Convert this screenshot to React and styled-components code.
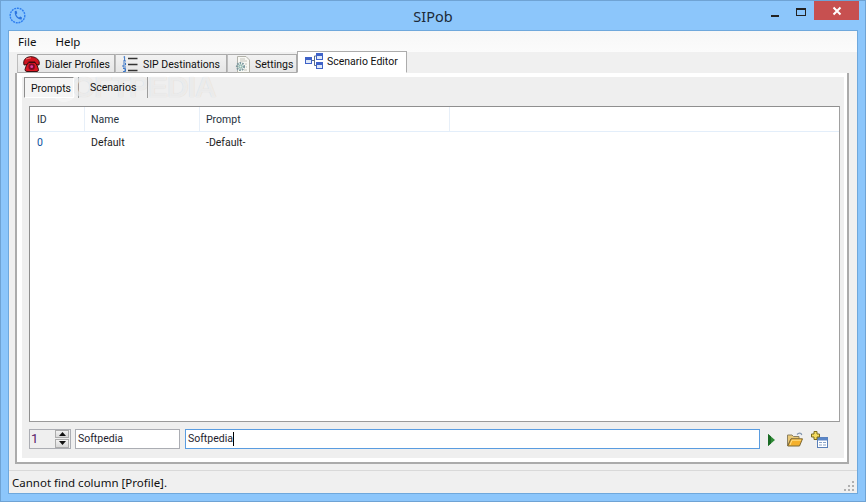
import React from "react";
import styled, { createGlobalStyle } from "styled-components";

const Global = createGlobalStyle`
  html, body { margin: 0; padding: 0; background: #8cc6fb; }
  * { box-sizing: border-box; }
`;

const Window = styled.div`
  position: relative;
  width: 866px;
  height: 502px;
  display: flex;
  flex-direction: column;
  background: #8cc6fb;
  border: 1px solid #6fa3d4;
  padding: 0 7px 7px;
  font-family: "Roboto", "Liberation Sans", sans-serif;
  font-size: 10.5px;
  color: #111;
  overflow: hidden;
`;
const TitleBar = styled.div`
  height: 29px;
  flex: none;
  display: grid;
  grid-template-columns: 1fr auto 1fr;
  align-items: center;
`;
const AppIcon = styled.svg`
  width: 17px;
  height: 17px;
  margin-left: 1px;
`;
const Title = styled.div`
  font-family: "Noto Sans", sans-serif;
  font-size: 14.5px;
  color: #1c2a38;
  margin-top: 1px;
`;
const Caption = styled.div`
  display: flex;
  justify-self: end;
  align-self: start;
  height: 20px;
  margin-right: -1px;
`;
const CaptionBtn = styled.div`
  width: ${p => p.$w}px;
  height: 19px;
  display: flex;
  align-items: center;
  justify-content: center;
  background: ${p => p.$bg || "transparent"};
`;
const Client = styled.div`
  flex: 1;
  display: flex;
  flex-direction: column;
  background: #f0f0f0;
  border: 1px solid #6fa8dc;
  min-height: 0;
`;
const MenuBar = styled.div`
  height: 21px;
  flex: none;
  display: flex;
  align-items: center;
  gap: 19px;
  padding: 0 0 0 9px;
  font-family: "Noto Sans", sans-serif;
  font-size: 11.5px;
  background: linear-gradient(#f7f7f7, #fbfbfb);
`;
const MenuItem = styled.span`
  line-height: 20px;
`;
const TabStrip = styled.div`
  height: 21px;
  flex: none;
  display: flex;
  align-items: flex-end;
  padding-left: 8px;
  margin-bottom: -1px;
  position: relative;
  z-index: 1;
  background: #f0f0f0;
`;
const Tab = styled.div`
  width: ${p => p.$w}px;
  height: ${p => (p.$active ? 22 : 19)}px;
  flex: none;
  display: flex;
  align-items: center;
  gap: ${p => p.$gap}px;
  padding: ${p => (p.$active ? `0 0 2px ${p.$pl}px` : `2px 0 0 ${p.$pl}px`)};
  background: ${p => (p.$active ? "#fff" : "linear-gradient(#f2f2f2, #e6e6e6)")};
  border: 1px solid #acacac;
  border-left-color: ${p => (p.$active ? "#acacac" : "#bdbdbd")};
  border-bottom: ${p => (p.$active ? "1px solid #fff" : "1px solid #acacac")};
  white-space: nowrap;
  position: relative;
  z-index: ${p => (p.$active ? 2 : 0)};
  svg { flex: none; margin-top: -1px; }
`;
const TabPanel = styled.div`
  flex: 1;
  min-height: 0;
  margin: 0 8px 6px 6px;
  border: 2px solid #ababab;
  border-top: 1px solid #acacac;
  background: #fff;
  padding: 4px 3px 4px 5px;
  display: flex;
`;
const Inner = styled.div`
  flex: 1;
  min-width: 0;
  background: #efefef;
  display: flex;
  flex-direction: column;
  padding: 0 4px 0 7px;
`;
const SubTabs = styled.div`
  height: 21px;
  margin-left: -5px;
  flex: none;
  display: flex;
  align-items: stretch;
`;
const SubTabActive = styled.div`
  position: relative;
  z-index: 6;
  width: 50px;
  height: 21px;
  display: flex;
  align-items: center;
  padding: 2px 0 0 6px;
  border: 1px solid;
  border-color: #8d8d8d #fff #fff #8d8d8d;
  background-color: #f5f5f5;
  background-image: radial-gradient(#d2d2d2 0.6px, transparent 0.7px);
  background-size: 2px 2px;
  margin-right: 4px;
`;
const SubTab = styled.div`
  position: relative;
  z-index: 6;
  width: 69px;
  display: flex;
  align-items: center;
  padding: 0 0 1px 11px;
  border-right: 1px solid #9c9c9c;
`;
const SubDivider = styled.div`
  width: 1px;
  background: #9c9c9c;
`;
const ListView = styled.div`
  flex: 1;
  min-height: 0;
  margin-top: 8px;
  background: #fff;
  border: 1px solid #8f8f8f;
  border-right-color: #a0a0a0;
  border-bottom-color: #9a9a9a;
  display: flex;
  flex-direction: column;
`;
const HeaderRow = styled.div`
  height: 25px;
  flex: none;
  display: flex;
  border-bottom: 1px solid #e3eefa;
`;
const HeaderCell = styled.div`
  width: ${p => (p.$w ? `${p.$w}px` : "auto")};
  flex: ${p => (p.$w ? "none" : 1)};
  display: flex;
  align-items: center;
  padding: 1px 0 0 ${p => p.$pl}px;
  border-right: ${p => (p.$w ? "1px solid #e7eff8" : "none")};
  color: #26323e;
`;
const Row = styled.div`
  height: 19px;
  display: flex;
  align-items: center;
  padding-top: 1px;
`;
const Cell = styled.div`
  width: ${p => p.$w}px;
  padding-left: ${p => p.$pl}px;
  color: ${p => p.$c || "#1d1d1d"};
`;
const Footer = styled.div`
  height: 36px;
  flex: none;
  display: flex;
  align-items: center;
  padding-bottom: 3px;
`;
const Spinner = styled.div`
  width: 42px;
  height: 20px;
  flex: none;
  border: 1px solid #abadb3;
  display: flex;
  color: #5a1a6a;
  align-items: center;
  padding-left: 1px;
  margin-right: 4px;
  background: #efefef;
  font-size: 13px;
`;
const SpinValue = styled.span`
  flex: 1;
`;
const SpinButtons = styled.div`
  width: 14px;
  height: 18px;
  display: flex;
  flex-direction: column;
  gap: 1px;
  margin-right: 1px;
`;
const SpinButton = styled.div`
  flex: 1;
  background: linear-gradient(#f2f2f2, #d8d8d8);
  border: 1px solid #acacac;
  display: flex;
  align-items: center;
  justify-content: center;
`;
const Input = styled.div`
  width: ${p => (p.$grow ? "auto" : `${p.$w}px`)};
  flex: ${p => (p.$grow ? 1 : "none")};
  height: 20px;
  margin-right: ${p => p.$mr}px;
  background: #fff;
  border: 1px solid ${p => (p.$focus ? "#5a9ce0" : "#abadb3")};
  padding: 0 2px;
  display: flex;
  align-items: center;
  color: #1d1d2d;
`;
const Caret = styled.span`
  width: 1px;
  height: 14px;
  background: #000;
`;
const Tools = styled.div`
  width: 80px;
  flex: none;
  display: flex;
  align-items: center;
  padding-left: 8px;
`;
const ToolIcon = styled.svg`
  flex: none;
  margin-right: ${p => p.$mr}px;
  margin-top: ${p => p.$mt || 0}px;
`;
const StatusBar = styled.div`
  height: 23px;
  flex: none;
  border-top: 1px solid #d9d9d9;
  display: flex;
  align-items: center;
  padding-left: 3px;
  position: relative;
  font-family: "Noto Sans", sans-serif;
  font-size: 11.5px;
`;
const Grip = styled.svg`
  position: absolute;
  right: 2px;
  bottom: 1px;
`;
const Watermark = styled.div`
  position: absolute;
  left: 52px;
  top: 69px;
  font-family: "Liberation Sans", sans-serif;
  font-weight: 700;
  font-size: 30px;
  letter-spacing: -1px;
  color: rgba(255, 255, 255, 0.6);
  text-shadow: 0 0 1px rgba(0, 0, 0, 0.14);
  pointer-events: none;
  z-index: 5;
`;
const WatermarkRing = styled.div`
  position: absolute;
  left: 50px;
  top: 75px;
  width: 26px;
  height: 26px;
  border-radius: 50%;
  border: 3px solid rgba(255, 255, 255, 0.35);
  pointer-events: none;
  z-index: 5;
`;

const PhoneRed = () => (
  <svg width="17" height="16" viewBox="0 0 17 16">
    <path d="M.7 7 C.5 3 4 .7 8 .7 C12 .7 16.3 3 16.3 7 L16 9 L12.5 8.5 L12 6 L5.5 6 L4.5 8.5 L1 9 Z" fill="#d0141f" stroke="#2c0406" strokeWidth=".9" />
    <path d="M3.5 9 L6 6.5 H12 L14 9 L15.5 13.5 Q15.5 15.5 14 15.5 H4 Q2 15.5 2 13.5 Z" fill="#dc1622" stroke="#2c0406" strokeWidth=".9" />
    <circle cx="8.7" cy="10.7" r="3.2" fill="#7d0a24" />
    <circle cx="8.7" cy="10.7" r="1.4" fill="#e23fa8" />
    <path d="M3 3 L8 1.8" stroke="#f77272" strokeWidth="1" />
  </svg>
);
const NumberedList = () => (
  <svg width="16" height="16" viewBox="0 0 16 16">
    <path d="M1.5 1 L2.6 0.5 V5 M1 5 H4" stroke="#2b6cc4" strokeWidth=".9" fill="none" />
    <path d="M1 7 H3.5 V9 H1 V11 H4" stroke="#2b6cc4" strokeWidth=".9" fill="none" />
    <path d="M1 12.5 H3.5 V15.5 H1 M2 14 H3.5" stroke="#2b6cc4" strokeWidth=".9" fill="none" />
    <path d="M6 2.5 H15.5 M6 8.5 H15.5 M6 14.5 H15.5" stroke="#333" strokeWidth="1.3" />
  </svg>
);
const SettingsDoc = () => (
  <svg width="17" height="17" viewBox="0 0 17 17">
    <path d="M3.5 .5 H12 L15.5 4 V16.5 H3.5 Z" fill="#f8f8f4" stroke="#b2b2aa" />
    <path d="M6 3 H11 M6 5 H13 M11 8 H13 M12 11 H13 M10 14 H13" stroke="#c4c4bc" />
    <circle cx="6.5" cy="10.5" r="3.6" fill="none" stroke="#7c9aa0" strokeWidth="2" strokeDasharray="1.6 1" />
    <circle cx="6.5" cy="10.5" r="2.2" fill="#8fb6b0" />
    <circle cx="6.5" cy="10.5" r="1" fill="#e4efe8" />
  </svg>
);
const Diagram = () => (
  <svg width="18" height="16" viewBox="0 0 18 16">
    <path d="M7 7.5 H9.5 M9.5 3 V12.5 M9.5 3 H11 M9.5 12.5 H11" stroke="#5a6c8c" fill="none" />
    <rect x=".5" y="4.5" width="6" height="6" fill="#dfe9f8" stroke="#3f62c8" />
    <rect x="1" y="5" width="5" height="2" fill="#3f62c8" />
    <rect x="11.5" y=".5" width="6" height="6" fill="#dfe9f8" stroke="#3f62c8" />
    <rect x="12" y="1" width="5" height="2" fill="#3f62c8" />
    <rect x="11.5" y="9.5" width="6" height="6" fill="#dfe9f8" stroke="#3f62c8" />
    <rect x="12" y="10" width="5" height="2" fill="#3f62c8" />
  </svg>
);

export default function App() {
  return (
    <>
      <Global />
      <Window>
        <TitleBar>
          <AppIcon viewBox="0 0 17 17">
            <circle cx="8.5" cy="8.5" r="7.3" fill="none" stroke="#2f7fef" strokeWidth="1.4" strokeDasharray="2 .8" />
            <path d="M5.8 4 L7.5 3.8 L8.3 6.2 L7.2 7.2 C7.6 8.6 8.6 9.8 10 10.4 L11.2 9.4 L13 10.6 L12.6 12.4 C9 13 5 9 5.8 4 Z" fill="#2a74e0" />
          </AppIcon>
          <Title>SIPob</Title>
          <Caption>
            <CaptionBtn $w={27}>
              <svg width="10" height="16" viewBox="0 0 10 16"><rect x="1" y="12" width="8" height="2" fill="#222" /></svg>
            </CaptionBtn>
            <CaptionBtn $w={26}>
              <svg width="12" height="16" viewBox="0 0 12 16"><rect x="1.5" y="5.5" width="9" height="7" fill="none" stroke="#222" /><rect x="1" y="5" width="10" height="2" fill="#222" /></svg>
            </CaptionBtn>
            <CaptionBtn $w={45} $bg="#c75050">
              <svg width="10" height="10" viewBox="0 0 10 10"><path d="M1.5 1.5 L8.5 8.5 M8.5 1.5 L1.5 8.5" stroke="#fff" strokeWidth="2" /></svg>
            </CaptionBtn>
          </Caption>
        </TitleBar>
        <Client>
          <MenuBar>
            <MenuItem>File</MenuItem>
            <MenuItem>Help</MenuItem>
          </MenuBar>
          <TabStrip>
            <Tab $w={98} $pl={5} $gap={5}><PhoneRed />Dialer Profiles</Tab>
            <Tab $w={112} $pl={6} $gap={5}><NumberedList />SIP Destinations</Tab>
            <Tab $w={70} $pl={6} $gap={4}><SettingsDoc />Settings</Tab>
            <Tab $w={110} $pl={7} $gap={4} $active><Diagram />Scenario Editor</Tab>
          </TabStrip>
          <TabPanel>
            <Inner>
              <SubTabs>
                <SubTabActive>Prompts</SubTabActive>
                <SubDivider />
                <SubTab>Scenarios</SubTab>
              </SubTabs>
              <ListView>
                <HeaderRow>
                  <HeaderCell $w={55} $pl={7}>ID</HeaderCell>
                  <HeaderCell $w={115} $pl={6}>Name</HeaderCell>
                  <HeaderCell $w={250} $pl={6}>Prompt</HeaderCell>
                  <HeaderCell $pl={0} />
                </HeaderRow>
                <Row>
                  <Cell $w={55} $pl={7} $c="#0b4f9e">0</Cell>
                  <Cell $w={115} $pl={6}>Default</Cell>
                  <Cell $w={250} $pl={6}>-Default-</Cell>
                </Row>
              </ListView>
              <Footer>
                <Spinner>
                  <SpinValue>1</SpinValue>
                  <SpinButtons>
                    <SpinButton><svg width="7" height="4" viewBox="0 0 7 4"><path d="M3.5 0 L7 4 H0 Z" fill="#111" /></svg></SpinButton>
                    <SpinButton><svg width="7" height="4" viewBox="0 0 7 4"><path d="M0 0 H7 L3.5 4 Z" fill="#111" /></svg></SpinButton>
                  </SpinButtons>
                </Spinner>
                <Input $w={105} $mr={5}>Softpedia</Input>
                <Input $grow $focus $mr={0}>Softpedia<Caret /></Input>
                <Tools>
                  <ToolIcon $mr={12} width="7" height="12" viewBox="0 0 7 12" $mt={2}>
                    <path d="M0 0 L7 6 L0 12 Z" fill="#2d8a34" />
                    <path d="M0 0 L3 2.6 V9.4 L0 12 Z" fill="#1a6a24" />
                  </ToolIcon>
                  <ToolIcon $mr={8} width="16" height="15" viewBox="0 0 16 15" $mt={1}>
                    <path d="M10 2.5 Q12 .2 14 1.5 L14.8 3" fill="none" stroke="#8296b0" strokeWidth="1.2" />
                    <path d="M.5 14 V3 H5 L6.5 4.5 H12 V7 H4 Z" fill="#e9c877" stroke="#8c8060" />
                    <path d="M.8 14 L4 6.8 H15.5 L12.5 14 Z" fill="#f4b02c" stroke="#7c6a38" />
                    <path d="M3 13 L5 8.2 H14" stroke="#ffe08a" fill="none" />
                  </ToolIcon>
                  <ToolIcon $mr={0} width="17" height="17" viewBox="0 0 17 17" $mt={1}>
                    <rect x="6.5" y="6.5" width="10" height="10" fill="#fff" stroke="#5a80b8" />
                    <rect x="6.5" y="6.5" width="10" height="3" fill="#5a86c8" />
                    <path d="M8 11.5 H11 M12 11.5 H15 M8 14 H11 M12 14 H15" stroke="#8aa4c8" />
                    <path d="M3 .5 H6 V3 H8.5 V6 H6 V8.5 H3 V6 H.5 V3 H3 Z" fill="#f5dc60" stroke="#7a6a1a" />
                  </ToolIcon>
                </Tools>
              </Footer>
            </Inner>
          </TabPanel>
          <StatusBar>
            Cannot find column [Profile].
            <Grip width="11" height="11" viewBox="0 0 11 11">
              <path d="M8 0h2v2H8z M4 4h2v2H4z M8 4h2v2H8z M0 8h2v2H0z M4 8h2v2H4z M8 8h2v2H8z" fill="#b0b0b0" />
            </Grip>
          </StatusBar>
        </Client>
        <WatermarkRing />
        <Watermark>SOFTPEDIA</Watermark>
      </Window>
    </>
  );
}
